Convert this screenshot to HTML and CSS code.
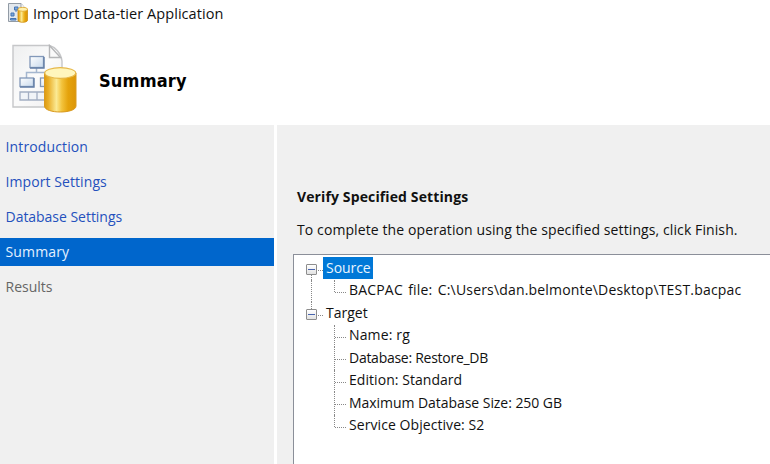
FILE: index.html
```html
<!DOCTYPE html>
<html lang="en">
<head>
<meta charset="utf-8">
<title>Import Data-tier Application</title>
<link rel="stylesheet" href="styles.css">
</head>
<body>
<svg class="defs" width="0" height="0" aria-hidden="true">
  <defs>
    <linearGradient id="page" x1="0" y1="0" x2="1" y2="1"><stop offset="0" stop-color="#eeeff0"/><stop offset=".5" stop-color="#fbfbfb"/><stop offset="1" stop-color="#ededee"/></linearGradient>
    <linearGradient id="gold"><stop offset="0" stop-color="#dc9a12"/><stop offset=".12" stop-color="#e9ae28"/><stop offset=".38" stop-color="#fbea94"/><stop offset=".55" stop-color="#f3c33c"/><stop offset=".75" stop-color="#e5a30c"/><stop offset="1" stop-color="#dc9608"/></linearGradient>
    <linearGradient id="node" x1="0" y1="0" x2="1" y2="1"><stop offset="0" stop-color="#fff"/><stop offset="1" stop-color="#c8d9ec"/></linearGradient>
  </defs>
</svg>
<div class="window">
  <header class="titlebar">
    <svg class="app-icon" width="20" height="20" viewBox="0 0 20 20">
      <path d="M.5.5H13L17 5V18.500H.5Z" fill="#e3e8ed" stroke="#929ba5"/>
      <path d="M13 .5V5H17" fill="#fff" stroke="#999fa7"/>
      <path d="M6.500 4H10V7H6.500ZM3 10H6V13H3ZM2.500 15.500H8V17H2.500Z" fill="#7fa8d8" stroke="#4474b5"/>
      <path d="M8 7V9" stroke="#4c78b5"/>
      <path d="M10 6V17.200C10 20 19.500 20 19.500 17.200V6Z" fill="url(#gold)" stroke="#cf8f10" stroke-width=".8"/>
      <ellipse cx="14.750" cy="6.300" rx="4.750" ry="2" fill="#fff1ae" stroke="#dda52c" stroke-width=".8"/>
    </svg>
    <span class="app-title">Import Data-tier Application</span>
  </header>
  <div class="banner">
    <svg class="banner-icon" width="66" height="70" viewBox="0 0 66 70">
      <path d="M1 1.500H37.500C43 3 49 9 50 17V63H1Z" fill="url(#page)" stroke="#c6c7c9" stroke-width="1.400"/>
      <path d="M37.500 1.500V13.500H48.500Z" fill="#fafafa" stroke="#b5b6b8" stroke-width="1.400"/>
      <path d="M24.500 24V28.500M14.500 34V28.500H35V34" fill="none" stroke="#a4b6cf" stroke-width="1.500"/>
      <g fill="url(#node)" stroke="#8298b9" stroke-width="1.300">
        <rect x="18" y="12.500" width="13.500" height="11"/>
        <rect x="8" y="34" width="13.500" height="8.500"/>
        <rect x="28.500" y="34" width="13.500" height="8.500"/>
      </g>
      <path d="M18 24H32V13M8 43H22V34" fill="none" stroke="#6680a8" stroke-width="1.400"/>
      <path d="M8 48H38V56H8ZM16.500 48V56M25 48V56" fill="#f1f4f8" stroke="#a3aec2" stroke-width="1.300"/>
      <path d="M32.500 29V62C32.500 70 64 70 64 62V29Z" fill="url(#gold)" stroke="#d99a20"/>
      <ellipse cx="48.250" cy="29" rx="15.500" ry="5.300" fill="#fff6bd" stroke="#e6b84a" stroke-width="1.200"/>
    </svg>
    <h1 class="banner-title">Summary</h1>
  </div>
  <div class="body">
    <nav class="steps">
      <a class="step s1">Introduction</a>
      <a class="step s2">Import Settings</a>
      <a class="step s3">Database Settings</a>
      <a class="step s4 current">Summary</a>
      <a class="step s5 pending">Results</a>
    </nav>
    <main class="content">
      <h2 class="heading">Verify Specified Settings</h2>
      <p class="hint">To complete the operation using the specified settings, click Finish.</p>
      <div class="tree">
        <div class="row root first"><i class="toggle"></i><span class="label selected">Source</span></div>
        <div class="row leaf last through"><span class="label t1">BACPAC file: C:\Users\dan.belmonte\Desktop\TEST.bacpac</span></div>
        <div class="row root final"><i class="toggle"></i><span class="label t2">Target</span></div>
        <div class="row leaf"><span class="label t3">Name: rg</span></div>
        <div class="row leaf"><span class="label t4">Database: Restore_DB</span></div>
        <div class="row leaf"><span class="label t5">Edition: Standard</span></div>
        <div class="row leaf"><span class="label t6">Maximum Database Size: 250 GB</span></div>
        <div class="row leaf last"><span class="label t7">Service Objective: S2</span></div>
      </div>
    </main>
  </div>
</div>
</body>
</html>
```
FILE: styles.css
```css
* { box-sizing: border-box; }
body { margin: 0; background: #fff; overflow: hidden; font: 14px/20px "Open Sans", "Noto Sans", sans-serif; color: #111; }
.defs { display: block; height: 0; }
.window { height: 464px; display: flex; flex-direction: column; }
.titlebar { height: 28px; display: flex; padding: 3px 0 0 8px; gap: 5px; white-space: nowrap; }
.app-title { font-size: 14.500px; letter-spacing: .06px; line-height: 21px; }
.banner { height: 97px; display: flex; padding: 16px 0 0 12px; gap: 21px; }
.banner-title { margin: 26px 0 0; font: bold 18px/22px "DejaVu Sans Condensed", "DejaVu Sans", sans-serif; font-stretch: condensed; color: #000; letter-spacing: .2px; }
.body { flex: 1; min-height: 0; display: flex; gap: 3px; }
.steps { width: 274px; background: #f0f0f0; padding-top: 8px; display: flex; flex-direction: column; gap: 7px; }
.step { height: 28px; line-height: 27px; padding-left: 5.500px; color: #2450bd; white-space: nowrap; }
.s1 { letter-spacing: .13px; }
.s2 { letter-spacing: .08px; }
.s3 { letter-spacing: -.03px; }
.s4 { letter-spacing: .15px; }
.s5 { letter-spacing: 0; }
.current { background: #06c; color: #e4f1ff; }
.pending { color: #666; }
.content { flex: 1; min-width: 0; background: #f0f0f0; padding: 61px 0 0 16px; display: flex; flex-direction: column; }
.heading { margin: 0 0 0 4px; font-size: 14px; line-height: 22px; font-weight: 700; letter-spacing: .12px; }
.hint { margin: 11px 0 0 4px; line-height: 22px; letter-spacing: .1px; white-space: nowrap; }
.tree { flex: 1; margin-top: 13px; background: #fff; border: solid #8b8f99; border-width: 1.500px 0 0 1px; padding: 2px 0 0 12px; }
.row { height: 22.500px; display: flex; align-items: center; white-space: nowrap; position: relative; }
.root { gap: 8px; }
.root::before { content: ""; position: absolute; left: 12px; top: 13px; width: 5px; border-top: 1px dotted #888; }
.root::after, .through::after { content: ""; position: absolute; left: 5px; border-left: 1px dotted #888; }
.first::after { top: 18px; bottom: 0; }
.through::after { top: 0; bottom: 0; }
.final::after { top: 0; height: 7px; }
.toggle { width: 11px; height: 11px; margin-top: 3px; border: 1px solid #8d8d8d; border-radius: 1px; background: linear-gradient(#4864ae, #4864ae) center / 7px 1px no-repeat, linear-gradient(#fff, #e2e2e2); }
.label { letter-spacing: 0; }
.root .label { margin-left: 1px; line-height: 22px; }
.root .selected { background: #0078d7; color: #e8f5ff; padding: 0 2px 0 3px; margin-left: -2px; letter-spacing: -.05px; }
.leaf { padding: 0 0 1px 43px; }
.leaf::before { content: ""; position: absolute; left: 28px; top: 0; bottom: 0; border-left: 1px dotted #888; }
.last::before { bottom: 10px; }
.leaf .label::before { content: ""; position: absolute; left: 29px; top: 12px; width: 11px; border-top: 1px dotted #888; }
.t1 { letter-spacing: .18px; word-spacing: 1.500px; }
.t3 { letter-spacing: .15px; }
.t4 { letter-spacing: -.27px; }
.t5 { letter-spacing: .05px; }
.t6 { letter-spacing: -.05px; }
.t7 { letter-spacing: .07px; }
```
